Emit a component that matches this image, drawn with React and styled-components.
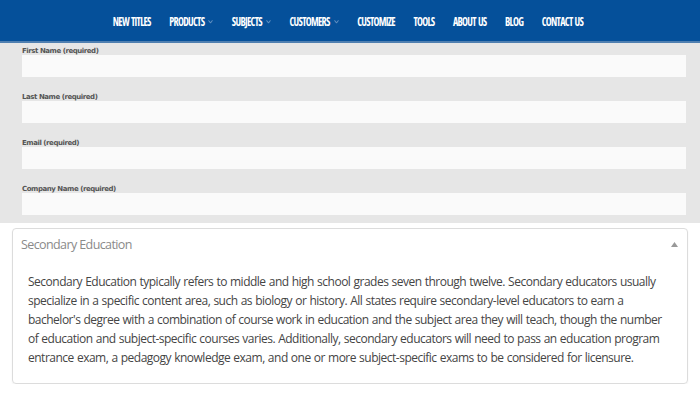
import styled, { createGlobalStyle } from "styled-components";

const Global = createGlobalStyle`
  body {
    margin: 0;
    background: #fff;
    font-family: "Open Sans", "DejaVu Sans", sans-serif;
  }
`;

const Nav = styled.nav`
  height: 41px;
  background: #05509a;
  border-bottom: 2px solid #4f7fb0;
  display: flex;
  justify-content: center;
  align-items: center;
  gap: 18.5px;
  padding-right: 4px;
`;

const NavItem = styled.span`
  color: #fff;
  font-family: "Open Sans", sans-serif;
  font-stretch: 62%;
  font-weight: 700;
  font-size: 10px;
  letter-spacing: -0.7px;
  word-spacing: 1px;
  text-transform: uppercase;
  display: flex;
  align-items: center;
  gap: 4px;
  transform: scaleY(1.25);
`;

const Chevron = styled.svg`
  width: 5px;
  height: 3px;
  opacity: 0.6;
`;

const FormArea = styled.div`
  background: #e6e6e6;
  padding: 2px 14px 8px 22px;
  display: flex;
  flex-direction: column;
  gap: 14px;
`;

const Field = styled.div`
  display: flex;
  flex-direction: column;
`;

const Label = styled.label`
  font-family: "DejaVu Sans", sans-serif;
  font-size: 7px;
  font-weight: bold;
  letter-spacing: -0.45px;
  color: #555;
  line-height: 8px;
  padding-top: 2px;
`;

const Input = styled.div`
  height: 22px;
  background: #fafafa;
`;

const Card = styled.div`
  margin: 5px 12px 0 12px;
  border: 1px solid #dcdcdc;
  border-radius: 4px;
  box-shadow: 0 1px 2px rgba(0, 0, 0, 0.06);
  padding: 7px 0 16px 0;
`;

const CardHead = styled.div`
  display: flex;
  justify-content: space-between;
  align-items: center;
  padding: 0 9px 0 8px;
  height: 17px;
`;

const Title = styled.span`
  font-size: 12.5px;
  letter-spacing: -0.6px;
  color: #8a8a8a;
`;

const Caret = styled.svg`
  width: 7px;
  height: 5px;
`;

const Body = styled.p`
  margin: 19px 0 0 0;
  padding: 0 12px 0 15px;
  font-size: 12px;
  letter-spacing: -0.5px;
  word-spacing: 0.5px;
  line-height: 19px;
  color: #454545;
`;

const items = [
  ["New Titles", false],
  ["Products", true],
  ["Subjects", true],
  ["Customers", true],
  ["Customize", false],
  ["Tools", false],
  ["About Us", false],
  ["Blog", false],
  ["Contact Us", false],
];

const fields = [
  "First Name (required)",
  "Last Name (required)",
  "Email (required)",
  "Company Name (required)",
];

export default function App() {
  return (
    <>
      <Global />
      <Nav>
        {items.map(([name, drop]) => (
          <NavItem key={name}>
            {name}
            {drop && (
              <Chevron viewBox="0 0 5 3">
                <path d="M0.5 0.5 L2.5 2.5 L4.5 0.5" stroke="#9bb8da" fill="none" strokeWidth="0.9" />
              </Chevron>
            )}
          </NavItem>
        ))}
      </Nav>
      <FormArea>
        {fields.map((f) => (
          <Field key={f}>
            <Label>{f}</Label>
            <Input />
          </Field>
        ))}
      </FormArea>
      <Card>
        <CardHead>
          <Title>Secondary Education</Title>
          <Caret viewBox="0 0 7 5">
            <path d="M0 5 L3.5 0 L7 5 Z" fill="#999" />
          </Caret>
        </CardHead>
        <Body>
          Secondary Education typically refers to middle and high school grades seven through
          twelve. Secondary educators usually specialize in a specific content area, such as
          biology or history. All states require secondary-level educators to earn a bachelor's
          degree with a combination of course work in education and the subject area they will
          teach, though the number of education and subject-specific courses varies.
          Additionally, secondary educators will need to pass an education program entrance
          exam, a pedagogy knowledge exam, and one or more subject-specific exams to be
          considered for licensure.
        </Body>
      </Card>
    </>
  );
}
